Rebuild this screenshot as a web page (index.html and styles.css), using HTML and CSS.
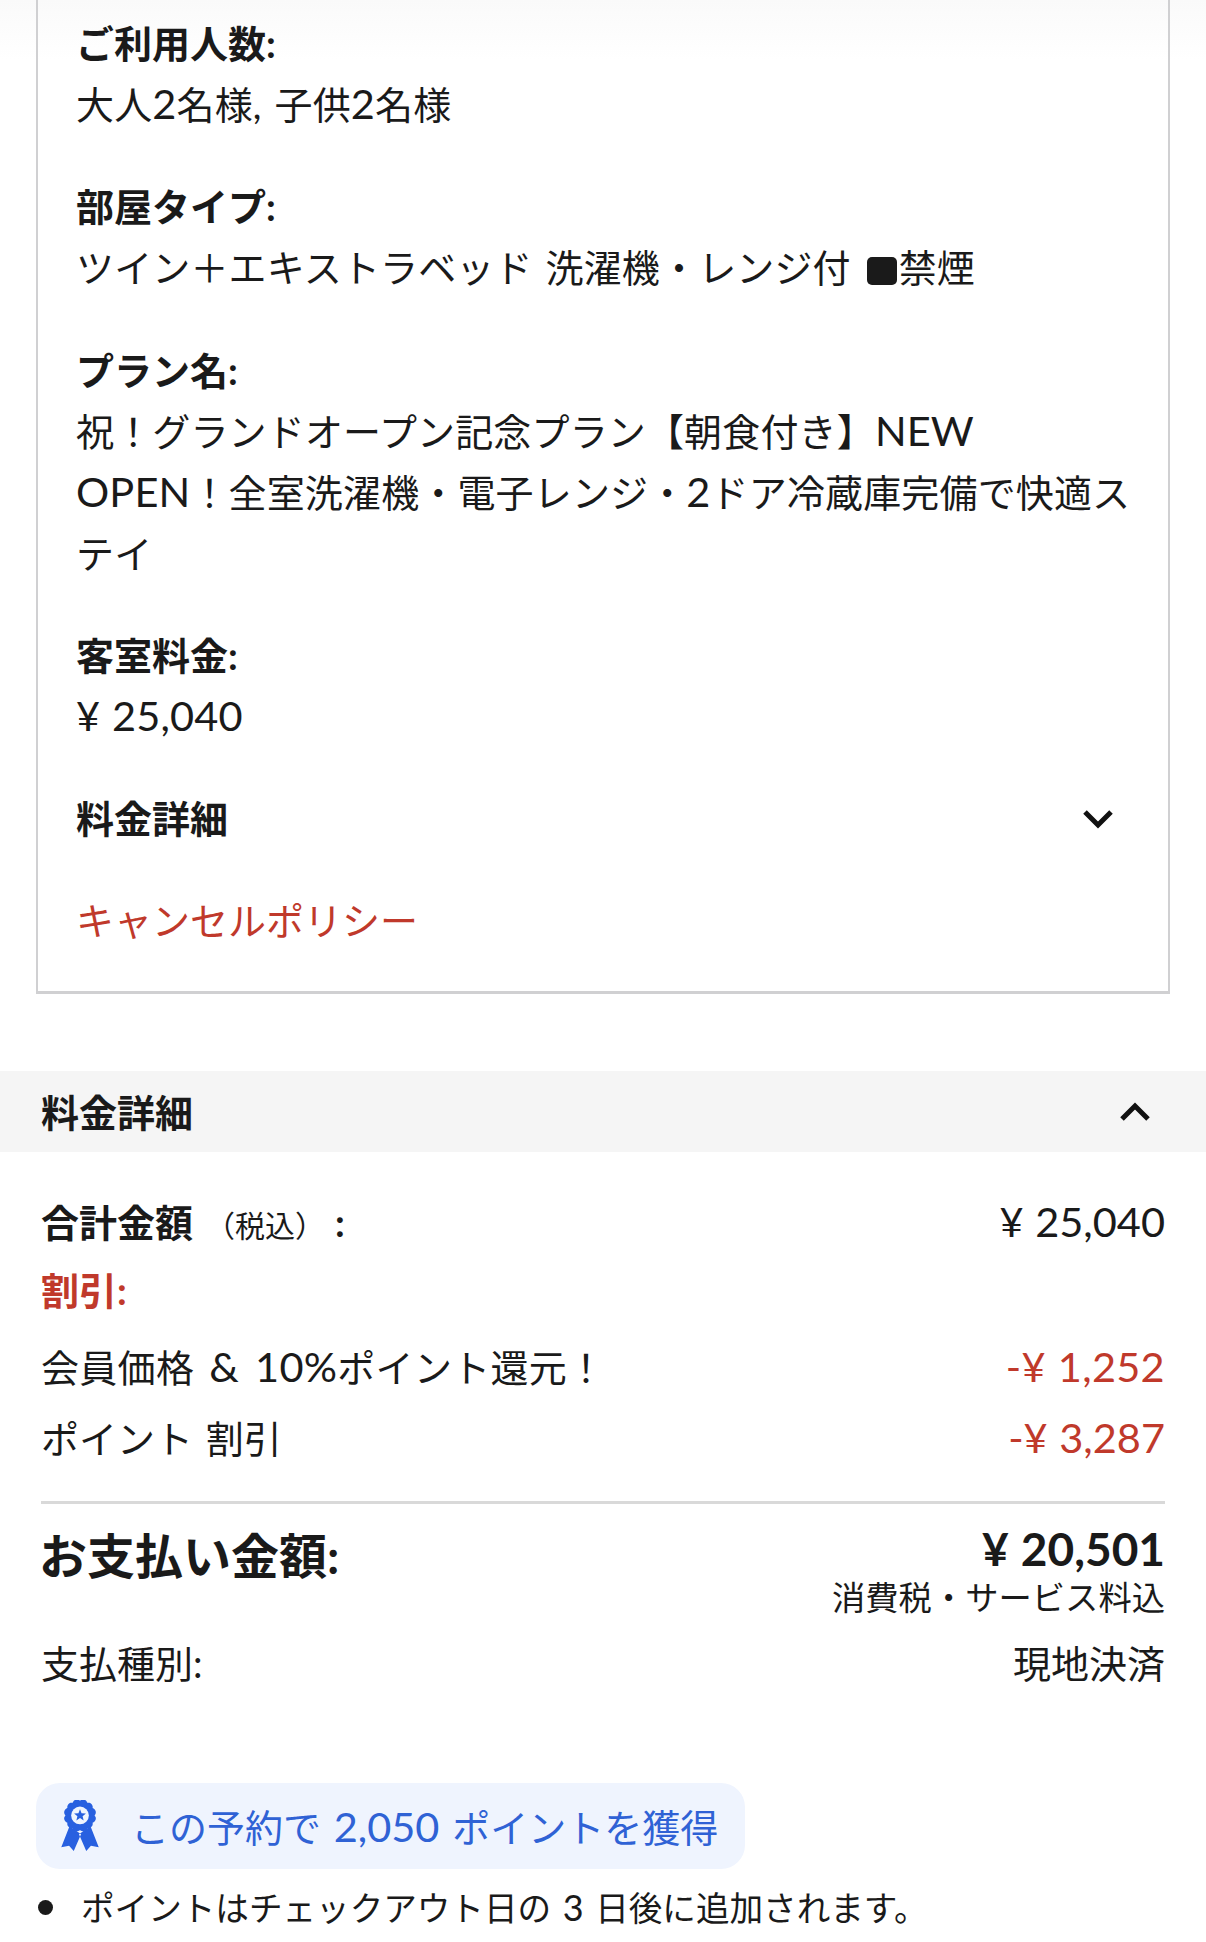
FILE: index.html
```html
<!DOCTYPE html>
<html lang="ja">
  <head>
    <meta charset="UTF-8" />
    <meta name="viewport" content="width=device-width, initial-scale=1.0" />
    <title>予約内容</title>
    <link rel="stylesheet" href="styles.css">
  </head>
  <body>
    <div class="top-fade"></div>
    <section class="booking-card">
      <div class="info-block">
        <div class="info-label">ご利用人数:</div>
        <div class="info-value">大人<span class="latin">2</span>名様, 子供<span class="latin">2</span>名様</div>
      </div>
      <div class="info-block">
        <div class="info-label">部屋タイプ:</div>
        <div class="info-value">ツイン＋エキストラベッド 洗濯機・レンジ付 <span class="mark"></span>禁煙</div>
      </div>
      <div class="info-block">
        <div class="info-label">プラン名:</div>
        <div class="info-value">祝！グランドオープン記念プラン【朝食付き】<span class="latin">NEW</span><br><span class="latin">OPEN</span>！全室洗濯機・電子レンジ・<span class="latin">2</span>ドア冷蔵庫完備で快適ス<br>テイ</div>
      </div>
      <div class="info-block">
        <div class="info-label">客室料金:</div>
        <div class="info-value"><span class="latin">¥ 25,040</span></div>
      </div>
      <div class="detail-toggle">
        <span class="info-label">料金詳細</span>
        <svg class="chevron" viewBox="0 0 32 20"><path d="M3 3l13 13L29 3"/></svg>
      </div>
      <a class="cancel-link">キャンセルポリシー</a>
    </section>

    <div class="price-header">
      <span class="info-label">料金詳細</span>
      <svg class="chevron" viewBox="0 0 32 20"><path d="M3 17L16 4l13 13"/></svg>
    </div>

    <section class="price-body">
      <div class="price-row total-row">
        <span><b>合計金額</b><small class="tax-note">（税込）</small><b>:</b></span>
        <span class="latin">¥ 25,040</span>
      </div>
      <div class="discount-title">割引:</div>
      <div class="price-row discount-row member-row">
        <span>会員価格 <span class="latin amp-text">&amp; 10%</span>ポイント還元！</span>
        <span class="minus latin">-¥ 1,252</span>
      </div>
      <div class="price-row discount-row">
        <span>ポイント 割引</span>
        <span class="minus latin">-¥ 3,287</span>
      </div>
      <div class="pay-row">
        <div class="pay-label">お支払い金額:</div>
        <div class="pay-amount">
          <div class="pay-price">¥ 20,501</div>
          <div class="pay-note">消費税・サービス料込</div>
        </div>
      </div>
      <div class="price-row method-row">
        <span>支払種別:</span>
        <span>現地決済</span>
      </div>
    </section>

    <div class="points-badge">
      <svg class="medal" viewBox="0 0 36 49">
        <path d="M8 25L0 45.500l7.500-1.500 4.500 5 7-16zM28 25l8 20.500-7.500-1.500-4.500 5-7-16z"/>
        <path d="M18 .8A4.200 4.200 0 0 1 25 2.700 4.200 4.200 0 0 1 30.100 7.800 4.200 4.200 0 0 1 32 14.800 4.200 4.200 0 0 1 30.100 21.800 4.200 4.200 0 0 1 25 26.900 4.200 4.200 0 0 1 18 28.800 4.200 4.200 0 0 1 11 26.900 4.200 4.200 0 0 1 5.900 21.800 4.200 4.200 0 0 1 4 14.800 4.200 4.200 0 0 1 5.900 7.800 4.200 4.200 0 0 1 11 2.700 4.200 4.200 0 0 1 18 .8z"/>
        <circle class="medal-hole" cx="18" cy="14.800" r="8.500"/>
        <path d="M18 8.800l1.500 3.900 4.200.3-3.200 2.600 1 4.100-3.500-2.300-3.500 2.300 1-4.100-3.200-2.600 4.200-.3z"/>
      </svg>
      <span class="points-text">この予約で <span class="latin">2,050</span> ポイントを獲得</span>
    </div>
    <ul class="points-notes">
      <li><span>ポイントはチェックアウト日の <span class="latin-small">3</span> 日後に追加されます。</span></li>
    </ul>
  </body>
</html>
```

FILE: styles.css
```css
html {
  height: 100%;
}
body {
  margin: 0;
  height: 1942px;
  overflow: hidden;
  position: relative;
  background-color: #fff;
  color: #1a1a1a;
  font-family: Lato, "Noto Sans CJK JP", sans-serif;
  font-size: 38px;
  line-height: 61px;
  word-spacing: 3px;
}
/* digits and roman letters run larger than the kana around them */
.latin {
  font-size: 41.500px;
  line-height: 1;
  word-spacing: 1px;
}
.latin-small {
  font-size: 36px;
  line-height: 1;
}
.top-fade {
  position: absolute;
  top: 0;
  left: 0;
  right: 0;
  height: 60px;
  background: linear-gradient(#fafafa, #fff);
}
.booking-card {
  position: relative;
  margin: 0 36px;
  padding: 13px 16px 40px 38px;
  height: 994px;
  box-sizing: border-box;
  border: 3px solid #d0d0d2;
  border-width: 0 2px 3px 2px;
}
.info-block {
  margin-bottom: 41.400px;
}
.info-value {
  letter-spacing: 0.150px;
}
.info-label {
  font-weight: 700;
}
.detail-toggle {
  display: flex;
  justify-content: space-between;
  align-items: center;
  margin-top: -1px;
  padding-right: 38px;
  margin-bottom: 41px;
}
.detail-toggle .chevron {
  margin-top: 2px;
}
.chevron {
  width: 32px;
  height: 20px;
  fill: none;
  stroke: #111;
  stroke-width: 5;
}
.mark {
  display: inline-block;
  width: 30px;
  height: 28px;
  margin: 0 2px 0 3px;
  border-radius: 5px;
  background-color: #1a1a1a;
  vertical-align: -3px;
}
.cancel-link {
  color: #c0392b;
}
.price-header {
  margin-top: 77px;
  height: 81px;
  padding: 0 55px 0 41px;
  display: flex;
  justify-content: space-between;
  align-items: center;
  background-color: #f5f5f5;
}
.price-header .info-label {
  padding-top: 2px;
}
.price-body {
  padding: 40px 41px 0;
}
.price-row {
  display: flex;
  justify-content: space-between;
  align-items: baseline;
}
.tax-note {
  font-size: 30px;
  margin-left: 12px;
  margin-right: 10px;
}
.discount-title {
  color: #c0392b;
  font-weight: 700;
  line-height: 52px;
  margin: 8px 0 16px;
}
.discount-row {
  line-height: 71px;
}
.member-row {
  word-spacing: 5px;
  letter-spacing: 0.300px;
}
.amp-text {
  word-spacing: 5px;
}
.minus {
  color: #c0392b;
}
.pay-row {
  margin-top: 26.500px;
  padding-top: 15.500px;
  border-top: 3px solid #d9d9d9;
  display: flex;
  justify-content: space-between;
}
.pay-label {
  font-size: 48px;
  font-weight: 700;
  line-height: 74px;
  margin-left: -2px;
}
.pay-amount {
  text-align: right;
}
.pay-price {
  font-size: 46px;
  font-weight: 700;
  line-height: 59px;
  word-spacing: 1px;
}
.pay-note {
  font-size: 33.300px;
  line-height: 39px;
}
.method-row {
  margin-top: 16px;
}
.points-badge {
  margin: 88.500px 0 0 36px;
  width: fit-content;
  height: 86px;
  padding: 0 27px 0 25px;
  display: flex;
  align-items: center;
  gap: 32px;
  box-sizing: border-box;
  border-radius: 24px;
  background-color: #eff4fe;
  color: #2f62d5;
}
.points-text {
  padding-top: 4px;
}
.medal {
  width: 38px;
  height: 51px;
  fill: #2860e0;
}
.medal-hole {
  fill: #eff4fe;
}
.points-notes {
  margin: 8px 0 0;
  padding: 0 0 0 38px;
  list-style: none;
  font-size: 33.600px;
  line-height: 62px;
}
.points-notes li {
  display: flex;
  align-items: center;
  gap: 28px;
}
.points-notes li::before {
  content: "";
  width: 15px;
  height: 15px;
  border-radius: 50%;
  background-color: #1a1a1a;
}
```
